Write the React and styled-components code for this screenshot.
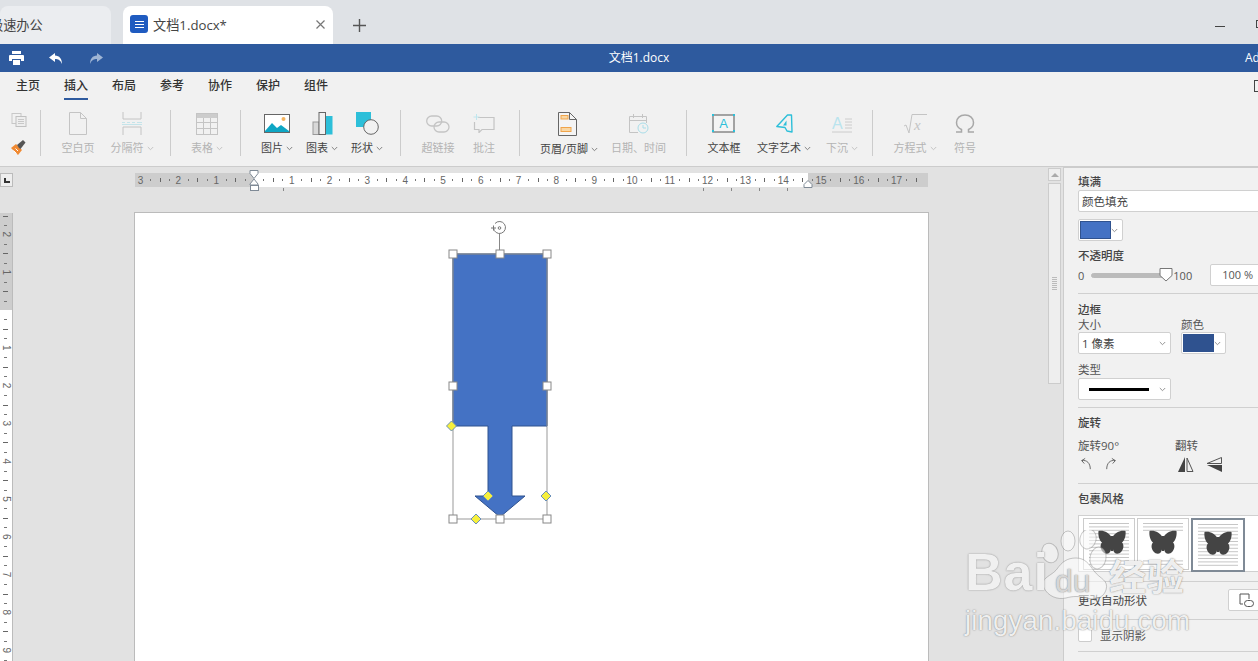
import React from 'react';
import styled, { createGlobalStyle } from 'styled-components';

const Global = createGlobalStyle`
  html, body { margin: 0; padding: 0; height: 100%; overflow: hidden; background: #e2e2e2; }
  #root { height: 100%; }
  * { box-sizing: border-box; }
`;
const FONT = `"Open Sans", "Noto Sans CJK SC", "Liberation Sans", sans-serif`;

const Shell = styled.div`
  width: 1258px; height: 661px; overflow: hidden; position: relative;
  display: flex; flex-direction: column; font-family: ${FONT}; font-size: 12px; color: #333;
`;
const TabStrip = styled.div`
  height: 44px; flex: none; background: #dfe2e6; display: flex; align-items: flex-end; gap: 12px; position: relative;
`;
const DocTab = styled.div`
  height: 38px; width: ${p => p.$w}px; flex: none; border-radius: 8px 8px 0 0;
  background: ${p => p.$active ? '#fff' : '#ebedf0'};
  display: flex; align-items: center; padding: 0 0 2px ${p => p.$pl || 0}px; font-size: 13.2px; color: #444; overflow: hidden; white-space: nowrap;
`;
const ClippedName = styled.span` margin-left: -10px; flex: none; `;
const DocBadge = styled.span`
  width: 18px; height: 18px; border-radius: 3px; background: #1f5bc0; flex: none; margin-right: 5px;
  display: flex; flex-direction: column; justify-content: center; align-items: center; gap: 2px;
  i { display: block; width: 9px; height: 1px; background: #fff; }
`;
const TabClose = styled.span` margin-left: auto; margin-right: 7px; display: flex; `;
const NewTab = styled.span` display: flex; align-self: center; margin: 6px 0 0 8px; `;
const WindowButtons = styled.div`
  margin-left: auto; align-self: flex-start; display: flex; align-items: center; gap: 31px; padding-top: 20px; margin-right: -7px;
`;
const MinBtn = styled.span` width: 10px; height: 1px; background: #444; margin-top: 4px;`;
const MaxBtn = styled.span` width: 9px; height: 8px; border: 1px solid #444; `;

const TitleBar = styled.div`
  height: 28px; flex: none; background: #2e5a9e; color: #fff; display: flex; align-items: center; position: relative; padding-left: 9px; gap: 25px;
`;
const RedoIcon = styled.svg` margin-left: 1px; `;
const TitleText = styled.div`
  position: absolute; left: 20px; right: 0; top: 0; line-height: 27px; text-align: center; font-size: 12px;
`;
const UserName = styled.div`
  position: absolute; left: 1245px; top: 0; line-height: 28px; font-size: 12px; white-space: nowrap;
`;
const MenuRow = styled.div`
  height: 28px; flex: none; background: #f1f1f1; display: flex; padding-left: 16px; gap: 24px; position: relative;
`;
const MenuItem = styled.div`
  height: 28px; line-height: 28px; font-size: 12px; color: #333; font-weight: 500; width: 24px; white-space: nowrap;
  border-bottom: 2px solid ${p => p.$active ? '#2e5a9e' : 'transparent'};
`;
const CornerBox = styled.span`
  position: absolute; left: 1254px; top: 8px; width: 9px; height: 12px; border: 1px solid #444;
`;
const Toolbar = styled.div`
  height: 67px; flex: none; background: #f1f1f1; border-bottom: 1px solid #ccc; display: flex; align-items: flex-start; padding-top: 10px;
`;
const Group = styled.div`
  display: flex; gap: ${p => p.$gap || 0}px; padding: 0 0 0 ${p => p.$pl || 0}px; height: 46px;
  border-right: 1px solid #ccc; width: ${p => p.$w}px; flex: none;
  &:last-child { border-right: none; }
`;
const Tool = styled.div`
  width: ${p => p.$w}px; flex: none; display: flex; flex-direction: column; align-items: center; color: ${p => p.$off ? '#b4b4b4' : '#444'};
  svg.icon { flex: none; display: block; }
`;
const ToolIcon = styled.div`
  height: 24px; margin-top: 2px; display: flex; align-items: center; justify-content: center; margin-right: ${p => p.$shift || 0}px;
`;
const ToolLabel = styled.div`
  margin-top: 5px; line-height: 16px; font-size: 11px; white-space: nowrap; display: flex; align-items: center; gap: 3px;
`;
const SideStack = styled.div`
  display: flex; flex-direction: column; gap: 13px; padding: 3px 0 0 11px;
`;

const Body = styled.div` flex: 1; min-height: 0; display: flex; `;
const Workspace = styled.div`
  flex: 1; min-width: 0; background: #e2e2e2; display: flex; flex-direction: column; overflow: hidden;
`;
const RulerRow = styled.div` height: 45px; flex: none; padding-top: 3px; display: flex; align-items: flex-start; `;
const RulerCorner = styled.div`
  width: 13px; height: 14px; margin: 3px 0 0 0; background: #eee; border: 1px solid #bbb; display: flex; align-items: flex-end; justify-content: center; padding-bottom: 3px;
  i { display: block; width: 6px; height: 5px; border-left: 2px solid #333; border-bottom: 2px solid #333; }
`;
const HRulerWrap = styled.div`
  margin-left: 122px; width: 800px; height: 24px; flex: none;
  svg { display: block; overflow: visible; }
`;
const CanvasRow = styled.div` flex: 1; min-height: 0; display: flex; align-items: flex-start; `;
const VRulerWrap = styled.div` width: 13px; flex: none; padding-top: 1px; svg { display: block; } `;
const Page = styled.div`
  margin-left: 121px; width: 795px; height: 460px; background: #fff; border: 1px solid #bbb; border-bottom: none; position: relative; flex: none;
`;
const ShapeCanvas = styled.svg` position: absolute; left: 295px; top: 2px; `;
const Scrollbar = styled.div`
  width: 15px; flex: none; background: #e2e2e2; padding: 1px 2px 0 0; display: flex; flex-direction: column; gap: 2px;
`;
const ScrollUp = styled.div`
  height: 13px; background: #eee; border: 1px solid #ccc; display: flex; align-items: center; justify-content: center;
  i { width: 0; height: 0; border: 4px solid transparent; border-bottom: 4px solid #aaa; border-top: none; }
`;
const ScrollThumb = styled.div`
  height: 201px; background: #eee; border: 1px solid #ccc; display: flex; flex-direction: column; align-items: center; justify-content: center; gap: 1px;
  i { width: 5px; height: 1px; background: #bbb; }
`;

const Panel = styled.div`
  width: 195px; flex: none; background: #f1f1f1; border-left: 1px solid #ccc; border-top: 1px solid #ccc; padding: 6px 0 0 14px; overflow: hidden;
`;
const PanelInner = styled.div` width: 220px; display: flex; flex-direction: column; `;
const Heading = styled.div`
  line-height: 16px; font-size: 11.5px; font-weight: 500; color: #444; margin-top: ${p => p.$mt || 0}px;
`;
const Caption = styled.div`
  line-height: 13px; font-size: 11.5px; color: #555; margin-top: ${p => p.$mt || 0}px; white-space: nowrap;
`;
const Field = styled.div`
  height: 22px; width: ${p => p.$w}px; margin-top: ${p => p.$mt || 0}px; background: #fff; border: 1px solid #d0d0d0; border-radius: 2px; display: flex; align-items: center;
  padding: 0 4px 0 3px; font-size: 11.5px; color: #444; justify-content: space-between; flex: none;
`;
const LineSample = styled.span` width: 60px; height: 3px; background: #000; margin-left: 7px; `;
const ColorField = styled.div`
  height: 22px; width: 45px; margin-top: ${p => p.$mt || 0}px; background: #fff; border: 1px solid #d0d0d0; border-radius: 2px; display: flex; align-items: center; padding: 0 4px 0 1px; justify-content: space-between; flex: none;
`;
const Swatch = styled.span` width: 32px; height: 18px; background: ${p => p.$c}; border: 1px solid #2f528f; `;
const Rule = styled.div` height: 1px; background: #d0d0d0; margin-top: ${p => p.$mt || 0}px; flex: none; width: 180px; `;
const SliderRow = styled.div` display: flex; align-items: center; height: 22px; color: #555; font-size: 11px; `;
const SliderTrack = styled.div`
  width: 74px; height: 5px; margin-left: 7px; border-radius: 3px; background: #bbb; border: 1px solid #bbb; flex: none;
`;
const Thumb = styled.svg` margin-left: -6px; flex: none; display: block; `;
const ValueBox = styled.div`
  margin-left: 18px; width: 60px; height: 22px; background: #fff; border: 1px solid #d0d0d0; border-radius: 2px; padding-left: 11px; line-height: 20px; color: #555; font-size: 11px;
`;
const TwoCols = styled.div` display: flex; gap: ${p => p.$gap}px; margin-top: ${p => p.$mt || 0}px; `;
const Col = styled.div` display: flex; flex-direction: column; width: ${p => p.$w ? p.$w + 'px' : 'auto'}; `;
const IconRow = styled.div` display: flex; gap: ${p => p.$gap}px; margin-top: 5px; align-items: center; height: 14px; padding-left: ${p => p.$pl || 2}px; `;
const WrapBox = styled.div`
  margin-top: 8px; height: 57px; width: 200px; background: #fff; border: 1px solid #d0d0d0; display: flex; padding: 2px 0 0 4px; gap: 2px; align-items: flex-start;
`;
const WrapTile = styled.div`
  width: ${p => p.$on ? 54 : 52}px; height: ${p => p.$on ? 54 : 52}px; flex: none; border: ${p => p.$on ? '2px solid #7f8a96' : '1px solid #ccc'}; background: #fff;
  display: flex; align-items: center; justify-content: center;
`;
const ChangeRow = styled.div` display: flex; align-items: center; justify-content: space-between; height: 22px; margin-top: 7px; width: 200px; `;
const DarkCaption = styled(Caption)` color: #444; `;
const ShapeBtn = styled.div`
  width: 50px; height: 22px; background: #fff; border: 1px solid #d0d0d0; border-radius: 2px; display: flex; align-items: center; padding-left: 10px;
`;
const CheckRow = styled.div` display: flex; align-items: center; gap: 8px; margin-top: 8px; height: 14px; font-size: 11.5px; color: #555; `;
const CheckBox = styled.span` width: 14px; height: 14px; background: #fff; border: 1px solid #ccc; border-radius: 2px; `;

const Watermark = styled.div`
  position: absolute; left: 960px; top: 530px; width: 240px; height: 110px; pointer-events: none; font-family: "Liberation Sans", "Noto Sans CJK SC", sans-serif; color: rgba(250,250,250,.92);
  text-shadow: 0 0 1px rgba(110,110,110,.75), 0 0 2px rgba(110,110,110,.4);
  svg { position: absolute; left: 0; top: 0; }
`;
const WmBai = styled.span` position: absolute; left: 5px; top: 14px; font-size: 52px; line-height: 56px; font-weight: 700; letter-spacing: 1px;`;
const WmDu = styled.span` position: absolute; left: 95px; top: 33px; font-size: 32px; line-height: 36px; color: rgba(226,226,226,.9); `;
const WmJy = styled.span` position: absolute; left: 149px; top: 29px; font-size: 37px; line-height: 40px; font-weight: 700; white-space: nowrap; letter-spacing: 1px; `;
const WmUrl = styled.span` position: absolute; left: 5px; top: 74px; font-size: 27.5px; line-height: 34px; white-space: nowrap; letter-spacing: .2px; `;

const Chev = ({ c = '#888' }) => (
  <svg width="7" height="5" viewBox="0 0 7 5" style={{ flex: 'none' }}><path d="M.8 1l2.7 2.700L6.200 1" fill="none" stroke={c} strokeWidth=".9" /></svg>
);

const OFF = '#c4c4c4';
const BLUE = '#2dbfd9';
const I = ({ w, h, children }) => <svg className="icon" width={w} height={h} viewBox={`0 0 ${w} ${h}`}>{children}</svg>;

const icons = {
  copy: <I w={16} h={14}><rect x="1" y=".5" width="9" height="10" fill="none" stroke="#c8c8c8" /><rect x="5" y="3.500" width="10" height="10" fill="#eee" stroke="#c0c0c0" /><path d="M7 6.500h6M7 8.500h6M7 10.500h6" stroke="#c8c8c8" /></I>,
  brush: <I w={15} h={15}><path d="M0 8l5-4 6 6-4 5z" fill="#f08a33" /><path d="M2.500 10.500l3 3M4.500 8.500l2.500 2.500" stroke="#fff" /><path d="M6 5l2 3 1.500 1 5-6.500L12 0z" fill="#555" /></I>,
  blank: <I w={18} h={23}><path d="M.5.500h11l6 6v16H.5z" fill="none" stroke={OFF} /><path d="M11.500.5v6h6" fill="none" stroke={OFF} /></I>,
  sep: <I w={20} h={23}><path d="M1 0v7h18V0M1 23v-8h18v8" fill="none" stroke={OFF} /><path d="M0 10.500h3M5 10.500h3M10 10.500h3M15 10.500h5M0 12.500h20" stroke="#c4e4ea" /></I>,
  table: <I w={22} h={22}><rect x=".5" y=".5" width="21" height="21" fill="none" stroke={OFF} /><rect x="1" y="1" width="20" height="4" fill="#ccc" /><path d="M1 9.500h20M1 15.500h20M7.500 5v16M14.500 5v16" stroke={OFF} /></I>,
  picture: <I w={26} h={19}><rect x=".5" y=".5" width="25" height="18" fill="#fff" stroke="#666" /><path d="M1 17l7-8 5 5 4-3 8 6v1H1z" fill="#0ea6c4" /><circle cx="19.500" cy="5" r="2" fill="#f4b45f" /></I>,
  chart: <I w={21} h={23}><rect x="13" y="4" width="7.500" height="18.500" fill="#2dbfd9" /><rect x="1" y="10" width="6" height="12.500" fill="#d8d8d8" stroke="#999" /><rect x="7" y=".5" width="6.500" height="22" fill="#f2f2f2" stroke="#666" /></I>,
  shape: <I w={23} h={23}><rect x="0" y="0" width="15" height="15" fill="#2dbfd9" /><circle cx="15" cy="15" r="7.300" fill="#f1f1f1" stroke="#666" /></I>,
  link: <I w={24} h={18}><rect x=".7" y="1" width="15" height="10" rx="5" fill="none" stroke={OFF} strokeWidth="1.300" /><rect x="8" y="7" width="15" height="10" rx="5" fill="none" stroke={OFF} strokeWidth="1.300" /></I>,
  comment: <I w={22} h={19}><path d="M5 3.500h16v12H9l-3 3v-3H1.500V8" fill="none" stroke={OFF} strokeWidth="1.200" /><path d="M3.500 0v6M.5 3h6" stroke="#bfe6ee" /></I>,
  header: <I w={19} h={24}><path d="M.5.500h11l7 7v16H.5z" fill="#f4f4f4" stroke="#666" /><path d="M11.500.5v7h7" fill="none" stroke="#666" /><rect x="3" y="3.500" width="7" height="3.500" fill="#f9d7a4" stroke="#f0a44a" /><rect x="3" y="15.500" width="10" height="4" fill="#f9d7a4" stroke="#f0a44a" /></I>,
  date: <I w={20} h={20}><path d="M9 18.500H.5V2.500h17V9M.5 6.500h17M4.500 0v4M13.500 0v4" fill="none" stroke={OFF} /><circle cx="14" cy="14" r="5" fill="#f1f1f1" stroke="#a9dde9" /><path d="M14 11v3h3" fill="none" stroke="#a9dde9" /></I>,
  textbox: <I w={24} h={19}><rect x="1" y="1" width="21" height="17" fill="#f4f4f4" stroke="#888" strokeWidth="1.500" /><path d="M0 0h2v2H0zM21 0h2v2h-2zM0 16h2v2H0zM21 16h2v2h-2z" fill={BLUE} /><text x="11.500" y="14" fontSize="13" textAnchor="middle" fill={BLUE} fontFamily="Liberation Sans">A</text></I>,
  wordart: <I w={17} h={19}><path d="M.8 12.500L11.500 1h4l.5 17-5-1-2-3.500z" fill="#f1f1f1" stroke={BLUE} strokeWidth="1.400" strokeLinejoin="round" /><path d="M10.500 6.500v5H7z" fill={BLUE} /></I>,
  drop: <I w={20} h={18}><text x="0" y="14" fontSize="16" fill="#b9e4ee" fontFamily="Liberation Sans">A</text><path d="M13 4h7M13 7h7M13 10h7M13 13h7M0 17h20" stroke="#ccc" /></I>,
  sqrt: <I w={23} h={20}><path d="M0 12l2-1 3 8L8 .5h15" fill="none" stroke={OFF} /><text x="10" y="16" fontSize="15" fontStyle="italic" fill={OFF} fontFamily="Liberation Serif">x</text></I>,
  omega: <I w={20} h={19}><path d="M1 18h5.500v-2.500C3 14 1.500 11 1.500 8.500 1.500 4 5 1 10 1s8.500 3 8.500 7.500c0 2.500-1.500 5.500-5 7V18H19" fill="none" stroke="#a8a8a8" strokeWidth="1.500" /></I>,
};

const Item = ({ w, label, icon, off, chev, shift }) => (
  <Tool $w={w} $off={off}>
    <ToolIcon $shift={shift}>{icons[icon]}</ToolIcon>
    <ToolLabel>{label}{chev && <Chev c={off ? '#c0c0c0' : '#777'} />}</ToolLabel>
  </Tool>
);

const range = (a, b) => Array.from({ length: b - a + 1 }, (_, i) => a + i);
const CM = 37.8;

const HRuler = () => {
  const ox = 119;
  const marks = range(-13, 70).map(q => q / 4);
  return (
    <svg width="800" height="24" viewBox="0 0 800 24">
      <rect x="0" y="3" width="793" height="14" fill="#cdcdcd" />
      <rect x="119" y="3" width="554" height="14" fill="#fff" />
      {marks.map(m => {
        const x = ox + m * CM;
        if (x < 2 || x > 790) return null;
        const q = Math.round(m * 4);
        if (q === 0) return null;
        if (q % 4 === 0) return <text key={q} x={x} y="14" fontSize="10" textAnchor="middle" fill="#666" fontFamily="Liberation Sans">{Math.abs(m)}</text>;
        if (q % 2 === 0) return <rect key={q} x={Math.round(x)} y="8" width="1" height="4" fill="#666" />;
        return <rect key={q} x={Math.round(x)} y="9" width="1" height="2" fill="#777" />;
      })}
      {[148, 568, 596, 624, 652].map(x => <rect key={x} x={x} y="18" width="1" height="3" fill="#888" />)}
      <path d="M115 .5h8v3l-4 5-4-5zM119 9l4 5v1h-8v-1z" fill="#fff" stroke="#7f8a96" />
      <rect x="115.500" y="15.500" width="8" height="5" fill="#fff" stroke="#7f8a96" />
      <path d="M669 17.500v-3l4-4 4 4v3z" fill="#fff" stroke="#7f8a96" />
    </svg>
  );
};

const VRuler = () => {
  const oy = 97;
  return (
    <svg width="13" height="448" viewBox="0 0 13 448">
      <rect x="0" y="0" width="12" height="97" fill="#cdcdcd" />
      <rect x="0" y="97" width="12" height="351" fill="#fff" />
      <rect x="12" y="0" width="1" height="448" fill="#bbb" />
      {range(-10, 40).map(q => {
        const y = oy + q / 4 * CM;
        if (y < 1 || y > 447 || q === 0) return null;
        if (q % 4 === 0) return <text key={q} x="5.500" y={y} fontSize="10" textAnchor="middle" fill="#666" fontFamily="Liberation Sans" transform={`rotate(90 5.500 ${y})`} dy="3">{Math.abs(q / 4)}</text>;
        if (q % 2 === 0) return <rect key={q} x="3" y={Math.round(y)} width="5" height="1" fill="#666" />;
        return <rect key={q} x="4" y={Math.round(y)} width="3" height="1" fill="#777" />;
      })}
    </svg>
  );
};

const Handle = ({ x, y }) => <rect x={x - 4} y={y - 4} width="8" height="8" fill="#fff" stroke="#888" />;
const Diamond = ({ x, y }) => <path d={`M${x} ${y - 5}l5 5-5 5-5-5z`} fill="#f7f03c" stroke="#6a8fb8" />;

const ShapeDrawing = () => (
  <ShapeCanvas width="130" height="320" viewBox="430 215 130 320">
    <rect x="453" y="254" width="94" height="265" fill="none" stroke="#999" />
    <path d="M453 254h94v172h-35v70h13l-25 21-25-21h13v-70h-35z" fill="#4472c4" stroke="#2f528f" />
    <path d="M453 254h94M453 254v172M547 254v172" stroke="#999" fill="none" />
    <path d="M499.500 234v20" stroke="#888" />
    <path d="M495 223.500a6 6 0 1 1-1.500 4.500" fill="none" stroke="#777" />
    <circle cx="499.500" cy="228" r="1.300" fill="none" stroke="#777" />
    <path d="M491 228h5M493.500 225.500v5" stroke="#777" />
    {[[453, 254], [500, 254], [547, 254], [453, 386], [547, 386], [453, 519], [500, 519], [547, 519]].map(([x, y]) => <Handle key={x + '-' + y} x={x} y={y} />)}
    {[[451.500, 426], [488, 496], [546, 496], [476, 519]].map(([x, y]) => <Diamond key={x + '-' + y} x={x} y={y} />)}
  </ShapeCanvas>
);

const Tile = ({ on, mode, bx = 0 }) => {
  const rows = range(0, 12).map(i => 1 + i * 3.4);
  const shown = mode === 'around' ? rows.filter(y => y < 9 || y > 35) : rows;
  return (
    <WrapTile $on={on}>
      <svg width="42" height="44" viewBox="0 0 42 44">
        {shown.map(y => <rect key={y} x="1" y={y} width="40" height="1" fill="#c6c6c6" />)}
        <g transform={`translate(${7 + bx} 8)`}>
          <path d="M13.500 7C11 3 6 0 .5 1c-.5 4 .5 9 3.500 11.500-2 2-2 6 .5 9 3 3.500 7.500 3 8.500-2 .3-1.500.5-2.500.5-3.500zM14.500 7C17 3 22 0 27.500 1c.5 4-.5 9-3.500 11.500 2 2 2 6-.5 9-3 3.500-7.500 3-8.500-2-.3-1.500-.5-2.500-.5-3.500z" fill="#444" />
          <path d="M13 6h2v15h-2z" fill="#444" />
        </g>
      </svg>
    </WrapTile>
  );
};

export default function App() {
  return (
    <Shell>
      <Global />
      <TabStrip>
        <DocTab $w={111}><ClippedName>极速办公</ClippedName></DocTab>
        <DocTab $w={210} $active $pl={7}>
          <DocBadge><i /><i /><i /></DocBadge>文档1.docx*
          <TabClose><svg width="11" height="11" viewBox="0 0 11 11"><path d="M1.500 1.500l8 8M9.500 1.500l-8 8" stroke="#777" strokeWidth="1.200" /></svg></TabClose>
        </DocTab>
        <NewTab><svg width="13" height="13" viewBox="0 0 13 13"><path d="M6.500 0v13M0 6.500h13" stroke="#555" strokeWidth="1.400" /></svg></NewTab>
        <WindowButtons><MinBtn /><MaxBtn /></WindowButtons>
      </TabStrip>
      <TitleBar>
        <svg width="15" height="14" viewBox="0 0 15 14"><path d="M3 0h9v3H3zM1 4h13a1 1 0 0 1 1 1v5h-3V8H3v2H0V5a1 1 0 0 1 1-1zM4 9h7v5H4z" fill="#fff" /></svg>
        <svg width="14" height="13" viewBox="0 0 14 13"><path d="M6 1L0 5.500 6 10V7c3 0 5.500 1 7 5 0-5-2.500-8.500-7-8.500z" fill="#fff" /></svg>
        <RedoIcon width="14" height="13" viewBox="0 0 14 13"><path d="M8 1l6 4.500L8 10V7c-3 0-5.500 1-7 5 0-5 2.500-8.500 7-8.500z" fill="#9fb5d4" /></RedoIcon>
        <TitleText>文档1.docx</TitleText>
        <UserName>Ad</UserName>
      </TitleBar>
      <MenuRow>
        <MenuItem>主页</MenuItem>
        <MenuItem $active>插入</MenuItem>
        <MenuItem>布局</MenuItem>
        <MenuItem>参考</MenuItem>
        <MenuItem>协作</MenuItem>
        <MenuItem>保护</MenuItem>
        <MenuItem>组件</MenuItem>
        <CornerBox />
      </MenuRow>
      <Toolbar>
        <Group $w={41}>
          <SideStack>{icons.copy}{icons.brush}</SideStack>
        </Group>
        <Group $w={130} $pl={19} $gap={13}>
          <Item w={36} icon="blank" label="空白页" off />
          <Item w={46} icon="sep" label="分隔符" off chev />
        </Group>
        <Group $w={70} $pl={18}>
          <Item w={36} icon="table" label="表格" off chev />
        </Group>
        <Group $w={160} $pl={17} $gap={7}>
          <Item w={38} icon="picture" label="图片" chev />
          <Item w={38} icon="chart" label="图表" chev />
          <Item w={38} icon="shape" label="形状" chev />
        </Group>
        <Group $w={119} $pl={19} $gap={16}>
          <Item w={36} icon="link" label="超链接" off />
          <Item w={24} icon="comment" label="批注" off />
        </Group>
        <Group $w={167} $pl={20} $gap={13}>
          <Item w={58} icon="header" label="页眉/页脚" chev shift={4} />
          <Item w={55} icon="date" label="日期、时间" off />
        </Group>
        <Group $w={186} $pl={19} $gap={13}>
          <Item w={36} icon="textbox" label="文本框" />
          <Item w={58} icon="wordart" label="文字艺术" chev />
          <Item w={32} icon="drop" label="下沉" off chev />
        </Group>
        <Group $w={120} $pl={20} $gap={16}>
          <Item w={44} icon="sqrt" label="方程式" off chev />
          <Item w={24} icon="omega" label="符号" off />
        </Group>
      </Toolbar>
      <Body>
        <Workspace>
          <RulerRow>
            <RulerCorner><i /></RulerCorner>
            <HRulerWrap><HRuler /></HRulerWrap>
          </RulerRow>
          <CanvasRow>
            <VRulerWrap><VRuler /></VRulerWrap>
            <Page><ShapeDrawing /></Page>
          </CanvasRow>
        </Workspace>
        <Scrollbar>
          <ScrollUp><i /></ScrollUp>
          <ScrollThumb>{range(0, 6).map(i => <i key={i} />)}</ScrollThumb>
        </Scrollbar>
        <Panel>
          <PanelInner>
            <Heading>填满</Heading>
            <Field $w={220}>颜色填充</Field>
            <ColorField $mt={7}><Swatch $c="#4472c4" /><Chev /></ColorField>
            <Heading $mt={7}>不透明度</Heading>
            <SliderRow>0<SliderTrack /><Thumb width="14" height="14" viewBox="0 0 14 14"><path d="M1 .5h12v7l-6 5.500-6-5.500z" fill="#fff" stroke="#777" /></Thumb><span>100</span><ValueBox>100 %</ValueBox></SliderRow>
            <Rule $mt={7} />
            <Heading $mt={8}>边框</Heading>
            <TwoCols $gap={10}>
              <Col $w={93}>
                <Caption>大小</Caption>
                <Field $w={93} $mt={1}>1 像素<Chev /></Field>
                <Caption $mt={9}>类型</Caption>
                <Field $w={93} $mt={2}><LineSample /><Chev /></Field>
              </Col>
              <Col>
                <Caption>颜色</Caption>
                <ColorField $mt={1}><Swatch $c="#2f528f" /><Chev /></ColorField>
              </Col>
            </TwoCols>
            <Rule $mt={7} />
            <Heading $mt={7}>旋转</Heading>
            <TwoCols $gap={58} $mt={8}>
              <Col $w={39}>
                <Caption>旋转90°</Caption>
                <IconRow $gap={13}>
                  <svg width="14" height="14" viewBox="0 0 14 14"><path d="M2 3c6-1 10 3 10 10M2 3l4-2.500M2 3l3 3.500" fill="none" stroke="#555" /></svg>
                  <svg width="14" height="14" viewBox="0 0 14 14"><path d="M12 3C6 2 2 6 2 13M12 3L8 .5M12 3L9 6.500" fill="none" stroke="#555" /></svg>
                </IconRow>
              </Col>
              <Col>
                <Caption>翻转</Caption>
                <IconRow $gap={12} $pl={3}>
                  <svg width="16" height="15" viewBox="0 0 16 15"><path d="M7 0v15H0z" fill="#444" /><path d="M9 1v13.500h6z" fill="none" stroke="#555" /></svg>
                  <svg width="16" height="15" viewBox="0 0 16 15"><path d="M16 8v7L1 8z" fill="#444" /><path d="M15.500 6.500V.5L1 6.500z" fill="none" stroke="#555" /></svg>
                </IconRow>
              </Col>
            </TwoCols>
            <Rule $mt={12} />
            <Heading $mt={7}>包裹风格</Heading>
            <WrapBox><Tile bx={3} /><Tile mode="around" /><Tile on /></WrapBox>
            <Rule $mt={9} />
            <ChangeRow>
              <DarkCaption>更改自动形状</DarkCaption>
              <ShapeBtn><svg width="15" height="14" viewBox="0 0 15 14"><path d="M4 11H1V1h9v5" fill="none" stroke="#555" /><rect x="5.500" y="7.500" width="9" height="6" rx="3" fill="#fff" stroke="#555" /></svg></ShapeBtn>
            </ChangeRow>
            <Rule $mt={8} />
            <CheckRow><CheckBox />显示阴影</CheckRow>
            <Rule $mt={9} />
          </PanelInner>
        </Panel>
      </Body>
      <Watermark>
        <svg width="240" height="110" viewBox="0 0 240 110">
          <g fill="rgba(250,250,250,.55)" stroke="rgba(120,120,120,.4)" strokeWidth="1">
            <ellipse cx="90" cy="23" rx="8" ry="10" transform="rotate(-20 90 23)" />
            <ellipse cx="108" cy="11" rx="7" ry="10" />
            <ellipse cx="128" cy="9" rx="8" ry="10" transform="rotate(15 128 9)" />
            <ellipse cx="138" cy="28" rx="8" ry="11" transform="rotate(10 138 28)" />
            <path d="M84 58c-5-10 8-12 13-19 5-7 10-11 19-11s13 6 18 13c6 8 15 9 12 19-3 9-12 10-20 8-7-2-13-2-20 0-9 2-18-2-22-10z" />
          </g>
        </svg>
        <WmBai>Bai</WmBai>
        <WmDu>du</WmDu>
        <WmJy>经验</WmJy>
        <WmUrl>jingyan.baidu.com</WmUrl>
      </Watermark>
    </Shell>
  );
}
